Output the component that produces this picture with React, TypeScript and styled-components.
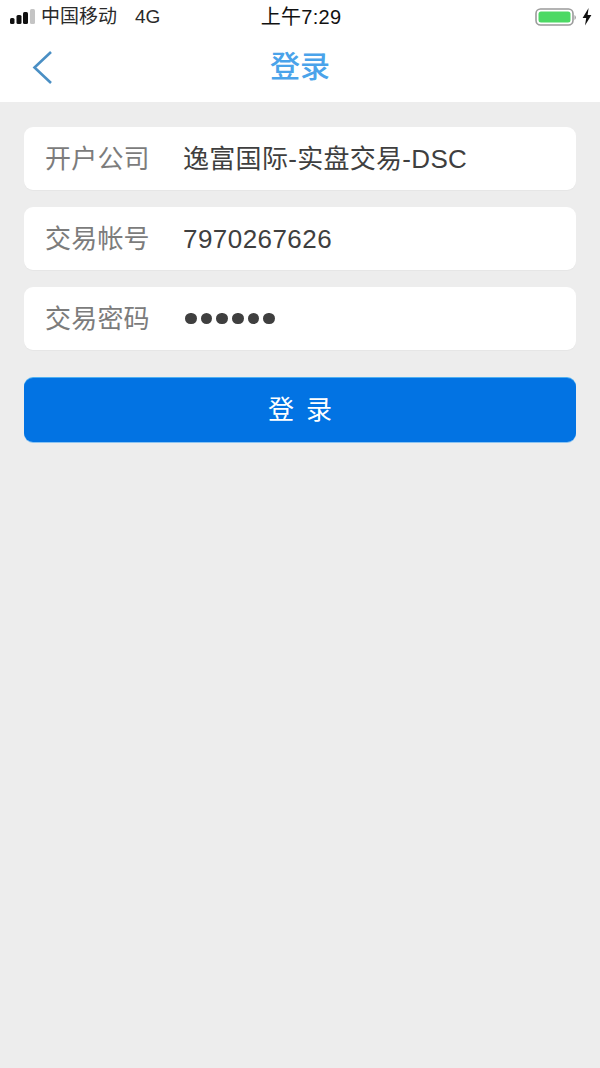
import React from "react";
import styled, { createGlobalStyle } from "styled-components";

const Global = createGlobalStyle`
  html, body { margin: 0; padding: 0; background: #ededed; }
  * { box-sizing: border-box; }
`;
const FONT = `"Liberation Sans", "Noto Sans CJK SC", sans-serif`;

const Page = styled.div`
  width: 600px; height: 1068px; background: #ededed; font-family: ${FONT};
  display: flex; flex-direction: column; overflow: hidden;
`;
const Header = styled.header`
  height: 102px; background: #fff; display: flex; flex-direction: column; flex: none;
`;
const StatusBar = styled.div`
  height: 34px; padding: 0 8px 0 10px; display: grid; grid-template-columns: 1fr auto 1fr; align-items: center; color: #1c1c1c;
`;
const StatusLeft = styled.div`display: flex; align-items: center; font-size: 19px; line-height: 22px; color: #2a2a2a;`;
const Carrier = styled.span`margin-left: 6px;`;
const Network = styled.span`margin-left: 18px;`;
const Clock = styled.div`font-size: 20px; line-height: 22px; color: #111; letter-spacing: 0.3px;`;
const StatusRight = styled.div`display: flex; justify-content: flex-end; align-items: center; gap: 5px;`;
const NavBar = styled.div`
  height: 68px; padding-bottom: 2px; position: relative; display: flex; align-items: center; justify-content: center;
`;
const BackIcon = styled.svg`position: absolute; left: 32px; top: 16px;`;
const Title = styled.h1`
  margin: 0; font-size: 30px; line-height: 40px; font-weight: 500; color: #4aa3ea; letter-spacing: 0;
`;
const Form = styled.main`
  padding: 25px 24px 0; display: flex; flex-direction: column; gap: 17px;
`;
const Row = styled.div`
  height: 63px; background: #fff; border-radius: 9px; display: flex; align-items: baseline; padding: 14px 0 0 21px;
  box-shadow: 0 1px 1px rgba(0,0,0,.03);
`;
const Label = styled.span`width: 138px; flex: none; font-size: 26px; line-height: 36px; color: #7c7c7c; letter-spacing: 0.2px;`;
const Value = styled.span<{ $spacing: number }>`
  font-size: 26px; line-height: 36px; color: #3f3f3f; letter-spacing: ${(p) => p.$spacing}px;
`;
const Dots = styled.span`display: flex; gap: 4.2px; margin-left: 2px; align-self: center; margin-top: -14px;`;
const Dot = styled.i`width: 11.5px; height: 11.5px; border-radius: 50%; background: #3f3f3f; display: block;`;
const Submit = styled.button`
  margin-top: 11px; height: 64px; border: 0; border-radius: 9px; background: #0273e3; color: #fff; font-family: ${FONT};
  font-size: 26px; padding: 0 0 5px; letter-spacing: 12px; text-indent: 12px;
  box-shadow: 0 -1px 0 #4fb0f2, 0 1px 0 #8cc4f2;
`;

export default function App() {
  return (
    <Page>
      <Global />
      <Header>
        <StatusBar>
          <StatusLeft>
            <svg width="25" height="16" viewBox="0 0 25 16" aria-hidden>
              <rect x="0" y="9" width="4.5" height="6" rx="1.5" fill="#111" />
              <rect x="6.5" y="6" width="5" height="9" rx="1.5" fill="#111" />
              <rect x="13" y="3" width="5" height="12" rx="1.5" fill="#111" />
              <rect x="20" y="0" width="5" height="15" rx="1.5" fill="#c4c4c4" />
            </svg>
            <Carrier>中国移动</Carrier>
            <Network>4G</Network>
          </StatusLeft>
          <Clock>上午7:29</Clock>
          <StatusRight>
            <svg width="42" height="20" viewBox="0 0 42 20" aria-hidden>
              <rect x="1" y="2" width="37" height="16" rx="4.5" fill="#fff" stroke="#9b9b9b" strokeWidth="1.6" />
              <rect x="3.5" y="4.5" width="32" height="11" rx="2.5" fill="#4cd964" />
              <path d="M39.5 8 a3 3 0 0 1 0 5z" fill="#9b9b9b" />
            </svg>
            <svg width="10" height="18" viewBox="0 0 10 18" aria-hidden>
              <path d="M6.6 0 L0.6 10 H4.2 L3 17.5 L9.4 7 H5.6 Z" fill="#111" />
            </svg>
          </StatusRight>
        </StatusBar>
        <NavBar>
          <BackIcon width="22" height="36" viewBox="0 0 22 36" aria-hidden>
            <path d="M19 2 L2.5 17.5 L19 33" fill="none" stroke="#4a8fc4" strokeWidth="2.6" />
          </BackIcon>
          <Title>登录</Title>
        </NavBar>
      </Header>
      <Form>
        <Row><Label>开户公司</Label><Value $spacing={0.3}>逸富国际-实盘交易-DSC</Value></Row>
        <Row><Label>交易帐号</Label><Value $spacing={0.45}>7970267626</Value></Row>
        <Row>
          <Label>交易密码</Label>
          <Dots>{[0,1,2,3,4,5].map((i) => <Dot key={i} />)}</Dots>
        </Row>
        <Submit type="button">登录</Submit>
      </Form>
    </Page>
  );
}
